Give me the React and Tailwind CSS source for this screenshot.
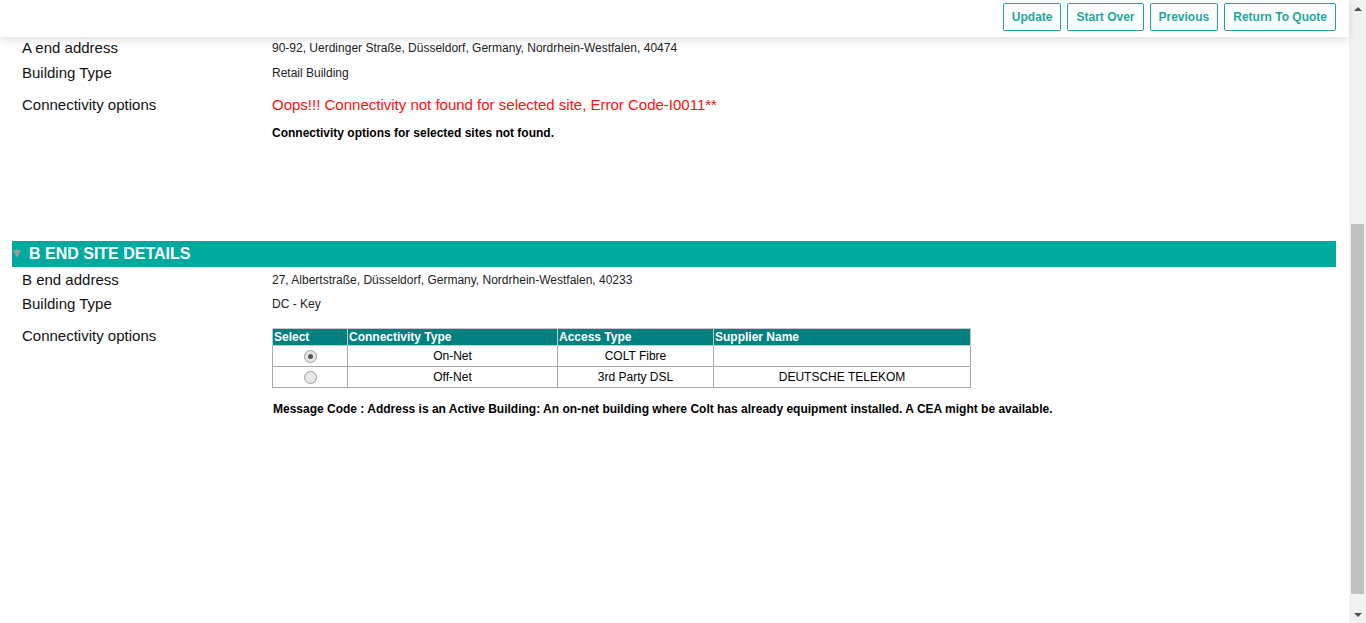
const font = { fontFamily: '"Liberation Sans", Arial, sans-serif' };

const buttons = ["Update", "Start Over", "Previous", "Return To Quote"];

const rows = [
  { checked: true, type: "On-Net", access: "COLT Fibre", supplier: "" },
  { checked: false, type: "Off-Net", access: "3rd Party DSL", supplier: "DEUTSCHE TELEKOM" },
];

function Row({ label, children, className = "" }) {
  return (
    <div className={`grid grid-cols-[250px_1fr] pl-[22px] ${className}`}>
      <div className="text-[15px] leading-[20px] text-[#111]">{label}</div>
      <div>{children}</div>
    </div>
  );
}

function Radio({ checked }) {
  return (
    <span className="inline-flex h-[13px] w-[13px] items-center justify-center rounded-full border border-[#9c9c9c] bg-[#e6e6e6] align-middle">
      {checked && <span className="h-[5px] w-[5px] rounded-full bg-[#5a5a5a]" />}
    </span>
  );
}

function Scrollbar() {
  return (
    <div className="flex w-[17px] flex-col bg-[#f1f1f1]">
      <div className="flex h-[17px] items-center justify-center">
        <span className="h-0 w-0 border-x-[4px] border-b-[4px] border-x-transparent border-b-[#505050]" />
      </div>
      <div className="flex-1 px-[2px]">
        <div className="mt-[207px] h-[370px] w-full bg-[#c1c1c1]" />
      </div>
      <div className="flex h-[17px] items-center justify-center">
        <span className="h-0 w-0 border-x-[4px] border-t-[4px] border-x-transparent border-t-[#505050]" />
      </div>
    </div>
  );
}

export default function App() {
  return (
    <div className="flex h-[623px] overflow-hidden bg-white" style={font}>
      <div className="flex-1">
        <header className="relative z-10 flex h-[37px] items-start justify-end gap-[6px] bg-white pr-[13px] pt-[3px] shadow-[0_3px_8px_rgba(0,0,0,0.12)]">
          {buttons.map((b) => (
            <button
              key={b}
              className="h-[28px] rounded-[2px] border border-[#1aa89c] bg-white px-[8px] text-[12px] font-bold text-[#1aa89c]"
            >
              {b}
            </button>
          ))}
        </header>

        <div className="text-[#222]">
          <Row label="A end address" className="mt-[1px]">
            <div className="text-[12px] leading-[20px]">
              90-92, Uerdinger Straße, Düsseldorf, Germany, Nordrhein-Westfalen, 40474
            </div>
          </Row>
          <Row label="Building Type" className="mt-[5px]">
            <div className="text-[12px] leading-[20px]">Retail Building</div>
          </Row>
          <Row label="Connectivity options" className="mt-[12px]">
            <div className="text-[15px] leading-[20px] text-[#ff1010]">
              Oops!!! Connectivity not found for selected site, Error Code-I0011**
            </div>
            <div className="mt-[10px] text-[12px] font-bold leading-[16px] text-black">
              Connectivity options for selected sites not found.
            </div>
          </Row>

          <div className="ml-[12px] mr-[13px] mt-[100px] flex h-[26px] items-center bg-[#00a99d]">
            <span className="ml-[1px] mr-[8px] h-0 w-0 border-x-[4.5px] border-t-[8px] border-x-transparent border-t-[#9a9a9a]" />
            <span className="text-[16px] font-bold text-white">B END SITE DETAILS</span>
          </div>

          <Row label="B end address" className="mt-[3px]">
            <div className="text-[12px] leading-[20px]">
              27, Albertstraße, Düsseldorf, Germany, Nordrhein-Westfalen, 40233
            </div>
          </Row>
          <Row label="Building Type" className="mt-[4px]">
            <div className="text-[12px] leading-[20px]">DC - Key</div>
          </Row>
          <Row label="Connectivity options" className="mt-[12px]">
            <table className="mt-[2px] w-[699px] border-collapse border border-[#0a3838] text-[12px]">
              <thead>
                <tr className="h-[17px] bg-[#008080] text-left font-bold text-white">
                  <th className="w-[75px] border border-[#c8c8c8] px-[1px] py-0 leading-[14px]">Select</th>
                  <th className="w-[210px] border border-[#c8c8c8] px-[1px] py-0 leading-[14px]">Connectivity Type</th>
                  <th className="w-[156px] border border-[#c8c8c8] px-[1px] py-0 leading-[14px]">Access Type</th>
                  <th className="border border-[#c8c8c8] px-[1px] py-0 leading-[14px]">Supplier Name</th>
                </tr>
              </thead>
              <tbody>
                {rows.map((r) => (
                  <tr key={r.type} className="h-[21px] text-center text-black">
                    <td className="border border-[#a8a8a8] p-0 leading-[14px]">
                      <Radio checked={r.checked} />
                    </td>
                    <td className="border border-[#a8a8a8] p-0 leading-[14px]">{r.type}</td>
                    <td className="border border-[#a8a8a8] p-0 leading-[14px]">{r.access}</td>
                    <td className="border border-[#a8a8a8] p-0 leading-[14px]">{r.supplier}</td>
                  </tr>
                ))}
              </tbody>
            </table>
            <div className="ml-[1px] mt-[13px] text-[12px] font-bold leading-[16px] text-black">
              Message Code : Address is an Active Building: An on-net building where Colt has already equipment installed. A CEA might be available.
            </div>
          </Row>
        </div>
      </div>
      <Scrollbar />
    </div>
  );
}
